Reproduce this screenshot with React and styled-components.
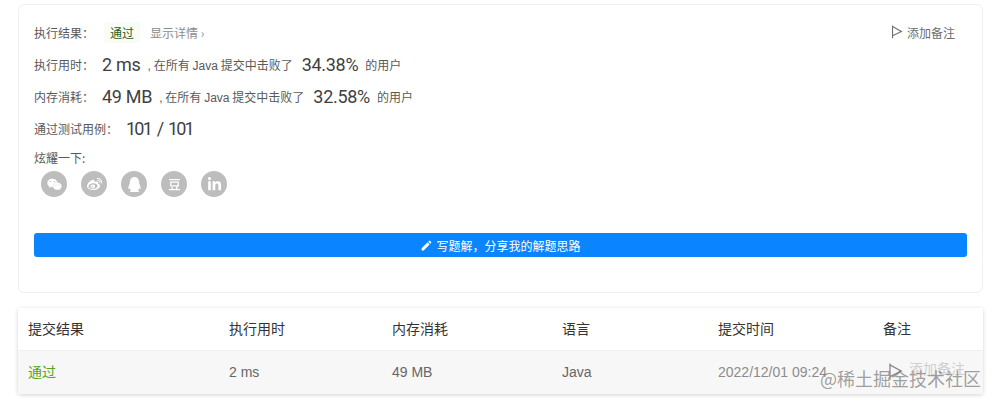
import React from 'react';
import styled, { createGlobalStyle } from 'styled-components';
import { FaWeixin, FaWeibo, FaQq, FaLinkedinIn } from 'react-icons/fa';
import { RiDoubanLine } from 'react-icons/ri';
import { MdEdit } from 'react-icons/md';

const cjk = `"Noto Sans CJK SC", sans-serif`;
const latin = `"Liberation Sans", "Noto Sans CJK SC", sans-serif`;

const GlobalStyle = createGlobalStyle`
  html, body {
    margin: 0;
    background: #fff;
    font-family: ${cjk};
  }
`;

const FlagIcon = ({ size = 12 }) => (
  <svg width={size} height={size * 1.15} viewBox="0 0 12 14" fill="none" stroke="currentColor" strokeWidth="1.1">
    <path d="M1.5 0.5V13.5" />
    <path d="M1.5 1.5L10.5 6.5L1.5 11" />
  </svg>
);

const shareIcons = [FaWeixin, FaWeibo, FaQq, RiDoubanLine, FaLinkedinIn];

const columns = [
  { title: '提交结果', value: '通过', width: 201, pass: true },
  { title: '执行用时', value: '2 ms', width: 163 },
  { title: '内存消耗', value: '49 MB', width: 170 },
  { title: '语言', value: 'Java', width: 156 },
  { title: '提交时间', value: '2022/12/01 09:24', width: 165, faint: true },
];

const App = () => {
  return (
    <Page>
      <GlobalStyle />
      <ResultCard>
        <ResultRow>
          <Label>执行结果：</Label>
          <PassTag>通过</PassTag>
          <DetailLink>显示详情 ›</DetailLink>
          <NoteButton><FlagIcon />添加备注</NoteButton>
        </ResultRow>
        <StatRow>
          <Label>执行用时：</Label>
          <BigValue>2 ms</BigValue>
          <Note>, 在所有 Java 提交中击败了</Note>
          <BigValue>34.38%</BigValue>
          <Note>的用户</Note>
        </StatRow>
        <StatRow>
          <Label>内存消耗：</Label>
          <BigValue>49 MB</BigValue>
          <Note>, 在所有 Java 提交中击败了</Note>
          <BigValue>32.58%</BigValue>
          <Note>的用户</Note>
        </StatRow>
        <StatRow>
          <Label>通过测试用例：</Label>
          <BigValue $tight>101 / 101</BigValue>
        </StatRow>
        <ShareTitle>炫耀一下:</ShareTitle>
        <ShareList>
          {shareIcons.map((Icon, i) => (
            <ShareCircle key={i}><Icon /></ShareCircle>
          ))}
        </ShareList>
        <SolutionButton><MdEdit />写题解，分享我的解题思路</SolutionButton>
      </ResultCard>

      <SubmitTable>
        <HeadRow>
          {columns.map((c) => (
            <HeadCell key={c.title} $width={c.width}>{c.title}</HeadCell>
          ))}
          <HeadCell $width={110}>备注</HeadCell>
        </HeadRow>
        <BodyRow>
          {columns.map((c) => (
            <BodyCell key={c.title} $width={c.width} $pass={c.pass} $faint={c.faint}>{c.value}</BodyCell>
          ))}
          <BodyCell $width={110}>
            <RowNote><FlagIcon size={15} /><span>添加备注</span></RowNote>
          </BodyCell>
        </BodyRow>
      </SubmitTable>
      <Watermark>@稀土掘金技术社区</Watermark>
    </Page>
  );
};

const Page = styled.div`
  position: relative;
  width: 995px;
  height: 403px;
  overflow: hidden;
  box-sizing: border-box;
  padding: 4px 12px 0 18px;
`;

const ResultCard = styled.div`
  box-sizing: border-box;
  height: 289px;
  padding: 15px 15px 0;
  border: 1px solid #f0f0f0;
  border-radius: 6px;
`;

const ResultRow = styled.div`
  display: flex;
  align-items: center;
  height: 24px;
`;

const StatRow = styled.div`
  display: flex;
  align-items: center;
  height: 24px;
  margin-top: 8px;
`;

const Label = styled.span`
  font-size: 12px;
  color: #595959;
  margin-right: 8px;
  white-space: nowrap;
`;

const PassTag = styled.span`
  font-size: 12px;
  color: #2b5b1e;
  background: #f8fcf4;
  border-radius: 4px;
  padding: 2px 6px;
  margin-left: 2px;
`;

const DetailLink = styled.span`
  font-size: 12px;
  color: #8c8c8c;
  margin-left: 10px;
`;

const NoteButton = styled.span`
  display: flex;
  align-items: center;
  gap: 4px;
  margin-left: auto;
  margin-right: 12px;
  font-size: 12px;
  color: #6e6e6e;
`;

const BigValue = styled.span`
  font-family: Roboto, sans-serif;
  font-size: 18px;
  font-weight: 400;
  color: #3f3f3f;
  white-space: nowrap;
  letter-spacing: ${(p) => (p.$tight ? '-1.8px' : '-0.3px')};
  word-spacing: ${(p) => (p.$tight ? '3px' : '0')};
`;

const Note = styled.span`
  font-family: ${latin};
  font-size: 12px;
  color: #595959;
  margin: 0 9px 0 7px;
  word-spacing: -0.5px;
  white-space: nowrap;
`;

const ShareTitle = styled.div`
  font-size: 12px;
  line-height: 16px;
  color: #595959;
  margin-top: 10px;
`;

const ShareList = styled.div`
  display: flex;
  gap: 14px;
  margin-top: 5px;
  padding-left: 7px;
`;

const ShareCircle = styled.span`
  display: flex;
  align-items: center;
  justify-content: center;
  width: 26px;
  height: 26px;
  border-radius: 50%;
  background: #bdbdbd;
  color: #fff;
  font-size: 15px;
`;

const SolutionButton = styled.div`
  display: flex;
  align-items: center;
  justify-content: center;
  gap: 3px;
  height: 24px;
  margin-top: 36px;
  border-radius: 3px;
  background: #0a84ff;
  color: #fff;
  font-size: 12px;

  svg {
    font-size: 13px;
  }
`;

const SubmitTable = styled.div`
  margin-top: 15px;
  width: 965px;
  border-radius: 3px;
  box-shadow: 0 1px 4px rgba(0, 0, 0, 0.18);
`;

const HeadRow = styled.div`
  display: flex;
  height: 43px;
  align-items: center;
  background: #fff;
  border-bottom: 1px solid #f0f0f0;
  box-sizing: border-box;
`;

const BodyRow = styled.div`
  display: flex;
  height: 43px;
  align-items: center;
  background: #f7f7f7;
`;

const HeadCell = styled.div`
  box-sizing: border-box;
  width: ${(p) => p.$width}px;
  padding: 0 0 2px 10px;
  font-size: 14px;
  line-height: 20px;
  color: #333;
`;

const bodyColor = (p) => {
  if (p.$pass) return '#52a818';
  return p.$faint ? '#8c8c8c' : '#666';
};

const BodyCell = styled.div`
  box-sizing: border-box;
  width: ${(p) => p.$width}px;
  padding: 0 0 2px 10px;
  font-family: ${latin};
  font-size: 14px;
  line-height: 20px;
  color: ${bodyColor};
  white-space: nowrap;
`;

const RowNote = styled.span`
  display: flex;
  align-items: center;
  gap: 6px;
  margin-left: 5px;
  color: #8a8a8a;

  span {
    color: #cfcfcf;
    margin-top: -6px;
  }
`;

const Watermark = styled.div`
  position: absolute;
  left: 820px;
  top: 367px;
  font-size: 18px;
  line-height: 22px;
  color: rgba(120, 120, 120, 0.7);
  white-space: nowrap;
`;

export default App;
